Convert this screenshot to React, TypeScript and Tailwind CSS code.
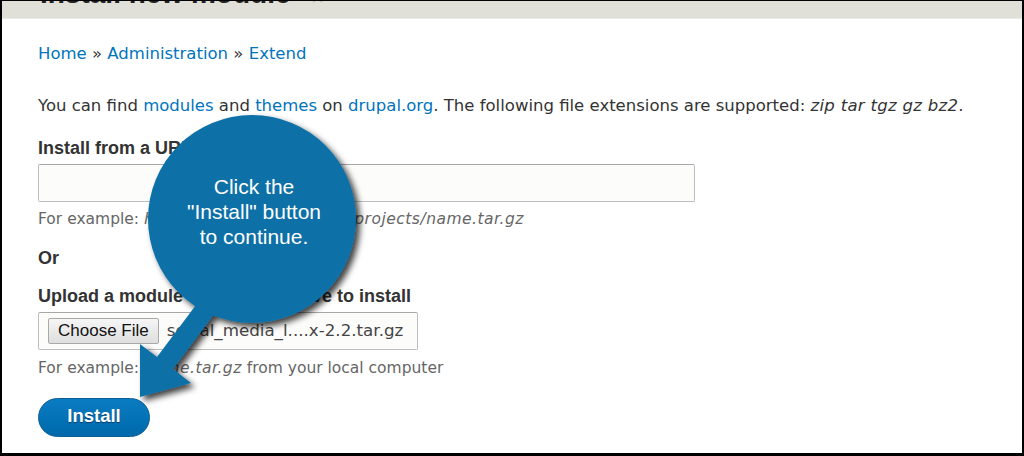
export default function App() {
  const sans = { fontFamily: '"DejaVu Sans", Verdana, sans-serif' };
  const arial = { fontFamily: '"Liberation Sans", Arial, sans-serif' };
  return (
    <div className="relative w-[1024px] h-[456px] bg-black pt-[1px] pl-[2px] pr-[2px] pb-[3px]" style={sans}>
      <div className="h-full w-full bg-white overflow-hidden">
        {/* header band, title cut off at the top */}
        <div className="h-[18px] bg-[#e0e0d8] border-b border-[#ebebe6] overflow-hidden pl-[38px]">
          <div className="mt-[-21px] flex items-baseline gap-[18px] leading-[28px] whitespace-nowrap">
            <span className="text-[28px] font-bold text-[#222]" style={arial}>
              Install new module
            </span>
            <span className="text-[20px] text-[#b5b5ad]">☆</span>
          </div>
        </div>

        <div className="pl-[36px] text-[16.5px] text-[#333]">
          <div className="mt-[25px] leading-[20px] text-[#0074bd]">
            <a>Home</a> <span className="text-[#333]">»</span> <a>Administration</a>{' '}
            <span className="text-[#333]">»</span> <a>Extend</a>
          </div>

          <p className="mt-[32px] leading-[20px] whitespace-nowrap">
            You can find <a className="text-[#0074bd]">modules</a> and <a className="text-[#0074bd]">themes</a> on{' '}
            <a className="text-[#0074bd]">drupal.org</a>. The following file extensions are supported:{' '}
            <em className="tracking-[0.3px]">zip tar tgz gz bz2</em>.
          </p>

          <label className="block mt-[22px] leading-[20px] font-bold text-[18px]" style={arial}>
            Install from a URL
          </label>
          <div className="mt-[6px] w-[657px] h-[38px] border border-[#bdbdbd] border-t-[#a8a8a8] rounded-[2px] bg-[#fcfcfb]" />
          <div className="mt-[7px] leading-[20px] text-[15.5px] text-[#666] whitespace-nowrap">
            For example: <em className="tracking-[0.5px]">http://ftp.drupal.org/files/projects/name.tar.gz</em>
          </div>

          <div className="mt-[19px] leading-[20px] font-bold text-[18px]" style={arial}>
            Or
          </div>

          <label className="block mt-[18px] leading-[20px] font-bold text-[18px]" style={arial}>
            Upload a module or theme archive to install
          </label>
          <div className="mt-[6px] w-[380px] h-[38px] border border-[#bdbdbd] border-t-[#a8a8a8] rounded-[2px] bg-[#fcfcfb] flex items-center pl-[9px] gap-[8px]">
            <div
              className="h-[26px] px-[9px] flex items-center border border-[#a9a9a9] rounded-[2px] bg-gradient-to-b from-[#f6f6f6] to-[#dedede] text-[17px] text-[#111]"
              style={arial}
            >
              Choose File
            </div>
            <span className="text-[16.7px] text-[#444] whitespace-nowrap">social_media_l....x-2.2.tar.gz</span>
          </div>
          <div className="mt-[8px] leading-[20px] text-[15.5px] text-[#666] whitespace-nowrap">
            For example: <em className="tracking-[0.5px]">name.tar.gz</em> from your local computer
          </div>

          <button
            className="mt-[20px] w-[112px] h-[39px] pb-[3px] leading-none rounded-full bg-gradient-to-b from-[#0a7cc3] to-[#0069ab] border border-[#0a5d96] text-white font-bold text-[18.5px] [text-shadow:0_1px_1px_#0b3d66]"
            style={arial}
          >
            Install
          </button>
        </div>
      </div>

      {/* callout overlay */}
      <svg className="absolute left-0 top-0 pointer-events-none" width="1024" height="456" viewBox="0 0 1024 456">
        <defs>
          <filter id="sh" x="-20%" y="-20%" width="150%" height="150%">
            <feDropShadow dx="4" dy="4" stdDeviation="3" floodColor="#000" floodOpacity="0.75" />
          </filter>
        </defs>
        <g filter="url(#sh)" fill="#0c6fa7">
          <polygon points="217,277 233,289 173,369 191,383 140,397 140,344 157,357" />
          <circle cx="252" cy="219" r="104" />
        </g>
      </svg>
      <div
        className="absolute left-[150px] top-[174px] w-[208px] text-center text-white text-[21px] leading-[25px]"
        style={arial}
      >
        Click the
        <br />
        "Install" button
        <br />
        to continue.
      </div>
    </div>
  );
}
